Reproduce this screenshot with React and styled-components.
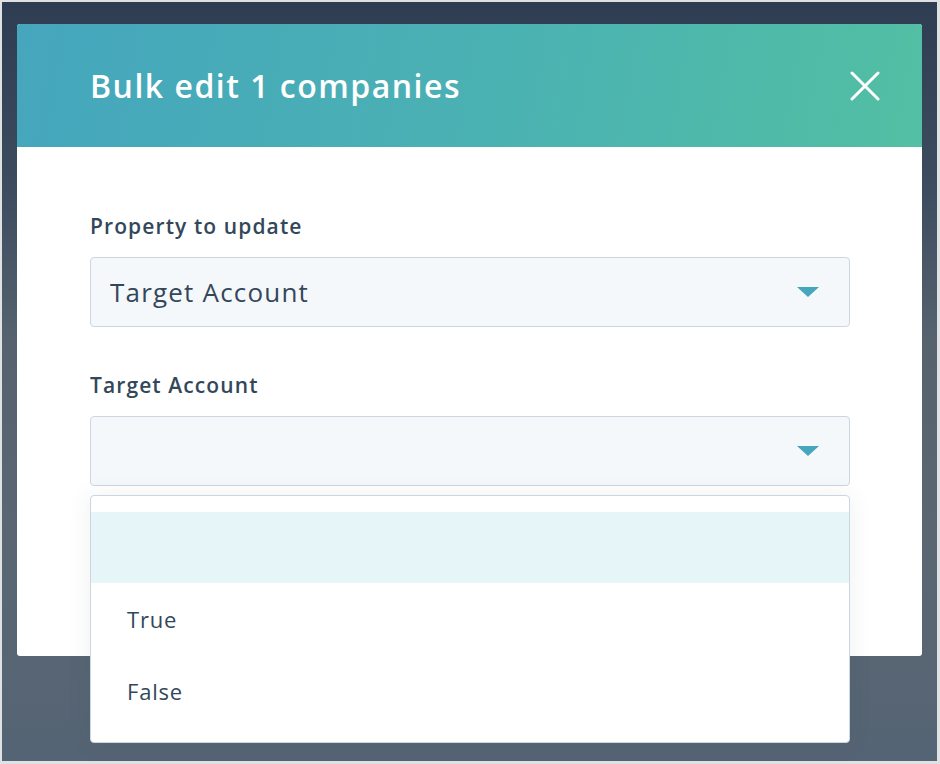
import React from 'react';
import styled, { createGlobalStyle } from 'styled-components';

const Global = createGlobalStyle`
    * { box-sizing: border-box; }
    body {
        margin: 0;
        background: #e4e6e8;
        font-family: "Open Sans", Lato, sans-serif;
    }
`;

const S = {
    Frame: styled.div`
        width: 940px;
        height: 764px;
        border-style: solid;
        border-color: #dfe1e3;
        border-width: 2px 3px 3px 2px;
        background: linear-gradient(180deg, #2e3d51 0%, #3d4c5f 25%, #56636f 45%, #5a6773 70%, #556474 100%);
        padding: 22px 0 0 15px;
        overflow: hidden;
    `,
    Modal: styled.div`
        width: 905px;
        height: 632px;
        background: #fff;
        border-radius: 3px;
        display: flex;
        flex-direction: column;
    `,
    Header: styled.div`
        height: 123px;
        flex: none;
        display: flex;
        align-items: center;
        justify-content: space-between;
        padding: 0 38px 0 73px;
        border-radius: 3px 3px 0 0;
        background: linear-gradient(100deg, #45a6bd 0%, #4bb2b2 55%, #53bfa3 100%);
    `,
    Title: styled.h1`
        margin: 0;
        color: #fff;
        font-size: 32px;
        font-weight: 600;
        letter-spacing: 1.5px;
    `,
    Close: styled.button`
        width: 38px;
        height: 38px;
        border: 0;
        padding: 0;
        background: none;
        display: flex;
        align-items: center;
        justify-content: center;
        cursor: pointer;
    `,
    Body: styled.div`
        padding: 65px 72px 0 73px;
        display: flex;
        flex-direction: column;
    `,
    Label: styled.label`
        display: block;
        color: #33475b;
        font-size: 21px;
        line-height: 28px;
        font-weight: 600;
        letter-spacing: 1.1px;
        margin: ${p => p.$first ? '0' : '44px'} 0 17px;
    `,
    Field: styled.div`
        position: relative;
    `,
    Select: styled.div`
        height: 70px;
        display: flex;
        align-items: center;
        justify-content: space-between;
        padding: 0 30px 0 19px;
        background: #f5f8fa;
        border: 1px solid #cbd6e2;
        border-radius: 4px;
        color: #33475b;
        font-size: 26px;
        letter-spacing: 1.2px;
    `,
    Caret: styled.span`
        width: 0;
        height: 0;
        border-left: 11px solid transparent;
        border-right: 11px solid transparent;
        border-top: 10px solid #45a6bd;
    `,
    Menu: styled.ul`
        position: absolute;
        left: 0;
        right: 0;
        top: 79px;
        height: 248px;
        margin: 0;
        padding: 16px 0 0;
        list-style: none;
        background: #fff;
        border: 1px solid #cbd6e2;
        border-radius: 4px;
        box-shadow: 0 1px 24px rgba(45, 62, 80, 0.08);
        z-index: 2;
    `,
    Option: styled.li`
        height: ${p => p.$blank ? '71px' : '72px'};
        display: flex;
        align-items: center;
        padding-left: 36px;
        color: #33475b;
        font-size: 22px;
        letter-spacing: 0.8px;
        background: ${p => p.$active ? '#e5f5f8' : '#fff'};
    `,
};

const App = () => {
    const options = [
        { label: '', active: true },
        { label: 'True' },
        { label: 'False' },
    ];

    return (
        <>
            <Global />
            <S.Frame>
                <S.Modal>
                    <S.Header>
                        <S.Title>Bulk edit 1 companies</S.Title>
                        <S.Close aria-label="Close">
                            <svg width="30" height="30" viewBox="0 0 30 30">
                                <path d="M2 2 L28 28 M28 2 L2 28" stroke="#fff" strokeWidth="3" strokeLinecap="round" />
                            </svg>
                        </S.Close>
                    </S.Header>
                    <S.Body>
                        <S.Label $first>Property to update</S.Label>
                        <S.Field>
                            <S.Select>
                                <span>Target Account</span>
                                <S.Caret />
                            </S.Select>
                        </S.Field>
                        <S.Label>Target Account</S.Label>
                        <S.Field>
                            <S.Select>
                                <span></span>
                                <S.Caret />
                            </S.Select>
                            <S.Menu>
                                {options.map((o, i) => (
                                    <S.Option key={i} $active={o.active} $blank={!o.label}>
                                        {o.label}
                                    </S.Option>
                                ))}
                            </S.Menu>
                        </S.Field>
                    </S.Body>
                </S.Modal>
            </S.Frame>
        </>
    );
};

export default App;
